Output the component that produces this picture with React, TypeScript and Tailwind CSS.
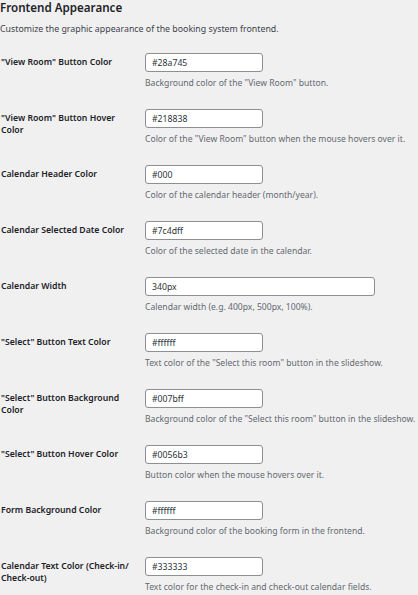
type Field = {
  label: string;
  value: string;
  description: string;
  wide?: boolean;
};

const fields: Field[] = [
  { label: '"View Room" Button Color', value: "#28a745", description: 'Background color of the "View Room" button.' },
  {
    label: '"View Room" Button Hover Color',
    value: "#218838",
    description: 'Color of the "View Room" button when the mouse hovers over it.'
  },
  { label: "Calendar Header Color", value: "#000", description: "Color of the calendar header (month/year)." },
  { label: "Calendar Selected Date Color", value: "#7c4dff", description: "Color of the selected date in the calendar." },
  { label: "Calendar Width", value: "340px", description: "Calendar width (e.g. 400px, 500px, 100%).", wide: true },
  {
    label: '"Select" Button Text Color',
    value: "#ffffff",
    description: 'Text color of the "Select this room" button in the slideshow.'
  },
  {
    label: '"Select" Button Background Color',
    value: "#007bff",
    description: 'Background color of the "Select this room" button in the slideshow.'
  },
  { label: '"Select" Button Hover Color', value: "#0056b3", description: "Button color when the mouse hovers over it." },
  { label: "Form Background Color", value: "#ffffff", description: "Background color of the booking form in the frontend." },
  {
    label: "Calendar Text Color (Check-in/ Check-out)",
    value: "#333333",
    description: "Text color for the check-in and check-out calendar fields."
  }
];

function SettingRow({ field }: { field: Field }) {
  return (
    <div className="flex py-[10px]">
      <label className="w-[134px] shrink-0 pt-[4px] pl-px pr-[4px] text-[8.7px] font-semibold leading-[11.5px] text-[#1d2327]">
        {field.label}
      </label>
      <div className="ml-[11px] flex flex-col">
        <input
          readOnly
          value={field.value}
          className={`${field.wide ? "w-[230px]" : "w-[118px]"} h-[19px] rounded-[3px] border border-[#8c8f94] bg-white px-[6px] text-[8.7px] text-[#2c3338] outline-none`}
        />
        <p className="mt-[5px] whitespace-nowrap text-[8.6px] leading-[12px] text-[#646970]">{field.description}</p>
      </div>
    </div>
  );
}

export default function App() {
  return (
    <div className="min-h-screen overflow-hidden bg-[#f0f0f1] font-['Noto_Sans','Open_Sans',sans-serif] text-[#1d2327]">
      <h2 className="pt-px text-[11.6px] font-semibold leading-[13px] text-[#1d2327]">Frontend Appearance</h2>
      <p className="mt-[9px] text-[8.8px] leading-[12px] text-[#3c434a]">
        Customize the graphic appearance of the booking system frontend.
      </p>
      <div className="mt-[8px]">
        {fields.map((field) => (
          <SettingRow key={field.label} field={field} />
        ))}
      </div>
    </div>
  );
}
